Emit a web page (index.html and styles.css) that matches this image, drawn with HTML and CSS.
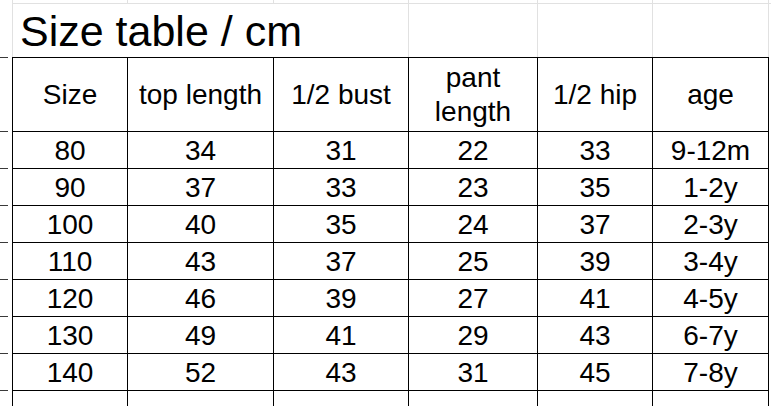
FILE: index.html
```html
<!DOCTYPE html>
<html>
<head>
<meta charset="utf-8">
<link rel="stylesheet" href="styles.css">
<title>Size table</title>
</head>
<body>
<div class="sheet">
  <!-- top strip -->
  <div class="g"></div>
  <div class="s"></div><div class="s"></div><div class="s"></div><div class="s"></div><div class="s"></div><div class="s"></div><div class="s"></div>

  <!-- title row -->
  <div class="g"></div>
  <div class="t">Size table / cm</div>
  <div class="tg"></div><div class="tg"></div><div class="tg"></div><div class="tg"></div>

  <!-- header -->
  <div class="g tick"></div>
  <div class="c h">Size</div>
  <div class="c h">top length</div>
  <div class="c h">1/2 bust</div>
  <div class="c h two">pant<br>length</div>
  <div class="c h">1/2 hip</div>
  <div class="c h">age</div>
  <div class="e"></div>

  <div class="g tick"></div>
  <div class="c d">80</div><div class="c d">34</div><div class="c d">31</div><div class="c d">22</div><div class="c d">33</div><div class="c d">9-12m</div>
  <div class="e"></div>

  <div class="g tick"></div>
  <div class="c d">90</div><div class="c d">37</div><div class="c d">33</div><div class="c d">23</div><div class="c d">35</div><div class="c d">1-2y</div>
  <div class="e"></div>

  <div class="g tick"></div>
  <div class="c d">100</div><div class="c d">40</div><div class="c d">35</div><div class="c d">24</div><div class="c d">37</div><div class="c d">2-3y</div>
  <div class="e"></div>

  <div class="g tick"></div>
  <div class="c d">110</div><div class="c d">43</div><div class="c d">37</div><div class="c d">25</div><div class="c d">39</div><div class="c d">3-4y</div>
  <div class="e"></div>

  <div class="g tick"></div>
  <div class="c d">120</div><div class="c d">46</div><div class="c d">39</div><div class="c d">27</div><div class="c d">41</div><div class="c d">4-5y</div>
  <div class="e"></div>

  <div class="g tick"></div>
  <div class="c d">130</div><div class="c d">49</div><div class="c d">41</div><div class="c d">29</div><div class="c d">43</div><div class="c d">6-7y</div>
  <div class="e"></div>

  <div class="g tick"></div>
  <div class="c d">140</div><div class="c d">52</div><div class="c d">43</div><div class="c d">31</div><div class="c d">45</div><div class="c d">7-8y</div>
  <div class="e"></div>

  <div class="g tick"></div>
  <div class="c d"></div><div class="c d"></div><div class="c d"></div><div class="c d"></div><div class="c d"></div><div class="c d"></div>
  <div class="e"></div>
</div>
</body>
</html>
```
FILE: styles.css
```css
html, body {
  margin: 0;
  padding: 0;
  background: #ffffff;
  overflow: hidden;
}

.sheet {
  display: grid;
  grid-template-columns: 12px 115px 146px 135px 129px 115px 116px 1fr;
  grid-template-rows: 4px 53px 74px repeat(7, 37px) 16px;
  width: 771px;
  height: 406px;
  font-family: "Liberation Sans", Arial, sans-serif;
  color: #000;
  box-sizing: border-box;
}

.sheet > div {
  box-sizing: border-box;
  min-width: 0;
}

.g {
  position: relative;
}

.tick::before {
  content: "";
  position: absolute;
  left: 0;
  top: 0;
  width: 8px;
  border-top: 1px solid #3a3a3a;
}

.s {
  border-left: 1px solid #e1e1e1;
  border-bottom: 1px solid #e1e1e1;
}

.t {
  grid-column: span 3;
  border-left: 1px solid #e1e1e1;
  font-size: 43px;
  line-height: 51px;
  padding: 2px 0 0 7px;
  white-space: nowrap;
}

.tg {
  border-left: 1px solid #e1e1e1;
}

.c {
  border-top: 1px solid #000;
  border-left: 1px solid #000;
  display: flex;
  align-items: center;
  justify-content: center;
  text-align: center;
  font-size: 28px;
}

.h {
  line-height: 32px;
}

.h.two {
  line-height: 34px;
}

.d {
  line-height: 32px;
  padding-top: 2px;
}

.e {
  border-left: 1px solid #000;
}
```
